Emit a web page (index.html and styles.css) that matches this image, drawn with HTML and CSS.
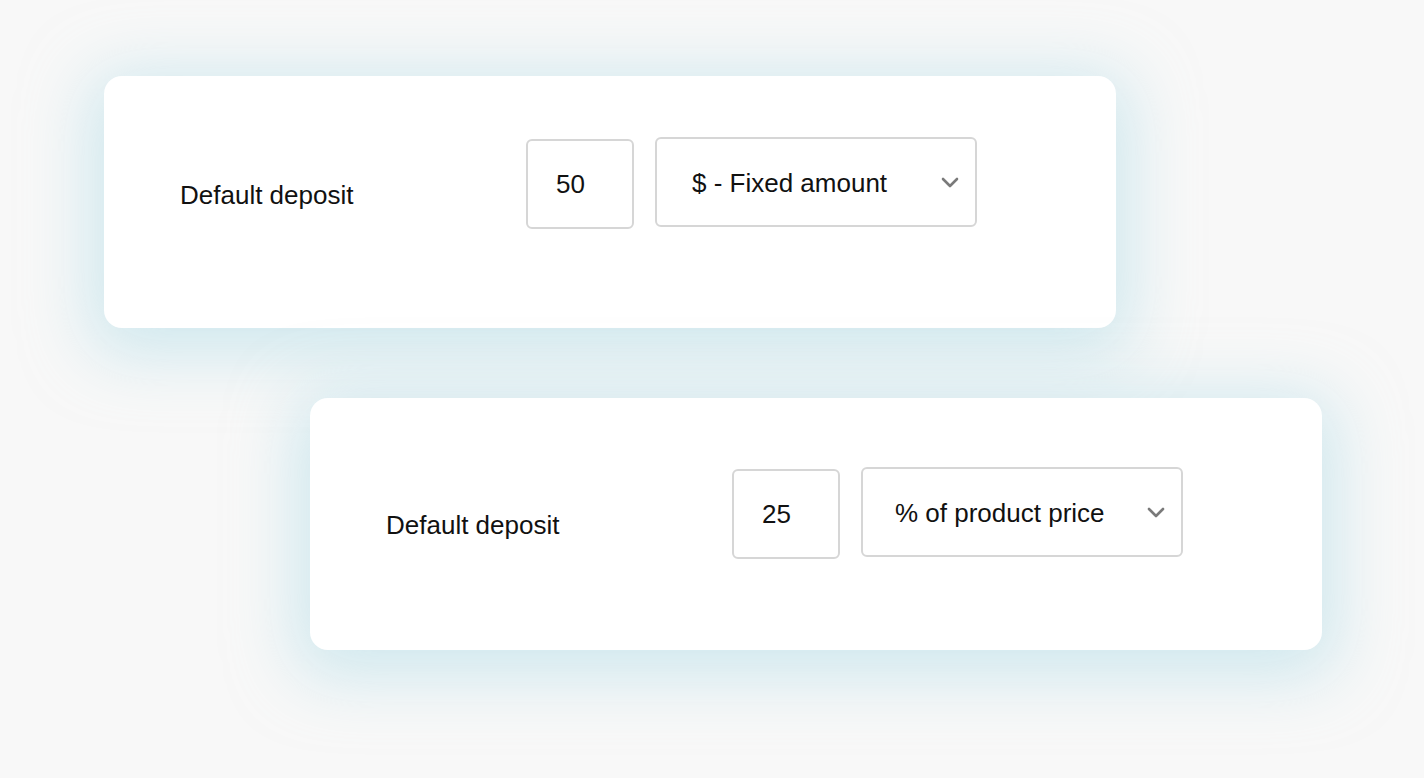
FILE: index.html
```html
<!DOCTYPE html>
<html lang="en">
<head>
<meta charset="utf-8">
<title>Default deposit</title>
<link rel="stylesheet" href="styles.css">
</head>
<body>
<main class="stack">
  <section class="card card-first">
    <div class="row">
      <label class="label" for="amt1">Default deposit</label>
      <input class="num" id="amt1" type="text" value="50">
      <div class="select-wrap">
        <select class="select">
          <option>$ - Fixed amount</option>
          <option>% of product price</option>
        </select>
        <svg class="chev" width="18" height="11" viewBox="0 0 18 11"><path d="M2 2 L9 9 L16 2" fill="none" stroke="#7a7a7a" stroke-width="2.6" stroke-linecap="round" stroke-linejoin="round"/></svg>
      </div>
    </div>
  </section>
  <section class="card card-second">
    <div class="row">
      <label class="label" for="amt2">Default deposit</label>
      <input class="num" id="amt2" type="text" value="25">
      <div class="select-wrap">
        <select class="select select-pct">
          <option>% of product price</option>
          <option>$ - Fixed amount</option>
        </select>
        <svg class="chev" width="18" height="11" viewBox="0 0 18 11"><path d="M2 2 L9 9 L16 2" fill="none" stroke="#7a7a7a" stroke-width="2.6" stroke-linecap="round" stroke-linejoin="round"/></svg>
      </div>
    </div>
  </section>
</main>
</body>
</html>
```
FILE: styles.css
```css
* { box-sizing: border-box; }
html, body {
  margin: 0;
  height: 100%;
  background: #f8f8f8;
  overflow: hidden;
}
body {
  font-family: "Liberation Sans", Arial, sans-serif;
  color: #111;
}
.stack {
  display: flex;
  flex-direction: column;
  align-items: flex-start;
  padding: 76px 0 0 104px;
  gap: 70px;
}
.card {
  width: 1012px;
  height: 252px;
  background: #fff;
  border-radius: 18px;
  box-shadow: 0 12px 64px 16px rgba(176, 220, 232, 0.55);
  padding-left: 76px;
}
.card-first { padding-top: 61px; }
.card-second { margin-left: 206px; padding-top: 69px; }
.row {
  display: flex;
  align-items: flex-start;
}
.label {
  width: 346px;
  font-size: 26px;
  line-height: 30px;
  margin-top: 43px;
}
.num {
  width: 108px;
  height: 90px;
  margin-top: 2px;
  border: 2px solid #d6d6d6;
  border-radius: 6px;
  padding: 0 0 0 28px;
  font: 26px/30px "Liberation Sans", Arial, sans-serif;
  color: #111;
  background: #fff;
  outline: none;
}
.select-wrap {
  position: relative;
  margin-left: 21px;
}
.select {
  appearance: none;
  -webkit-appearance: none;
  width: 322px;
  height: 90px;
  border: 2px solid #d6d6d6;
  border-radius: 6px;
  padding: 2px 0 0 35px;
  font: 26px/30px "Liberation Sans", Arial, sans-serif;
  color: #111;
  background: #fff;
  outline: none;
}
.select-pct { padding-left: 32px; }
.chev {
  position: absolute;
  left: 286px;
  top: 40px;
  pointer-events: none;
}
```
